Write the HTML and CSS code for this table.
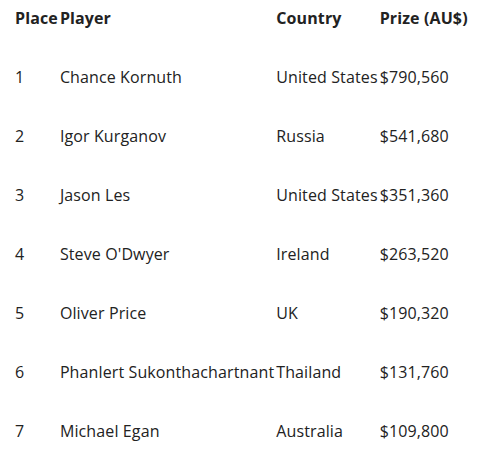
FILE: index.html
```html
<!DOCTYPE html>
<html>
<head>
<meta charset="utf-8">
<link rel="stylesheet" href="styles.css">
</head>
<body>
<div class="wrap">
<table class="results">
<thead>
<tr><th>Place</th><th>Player</th><th>Country</th><th>Prize (AU$)</th></tr>
</thead>
<tbody>
<tr><td>1</td><td>Chance Kornuth</td><td>United States</td><td>$790,560</td></tr>
<tr><td>2</td><td>Igor Kurganov</td><td>Russia</td><td>$541,680</td></tr>
<tr><td>3</td><td>Jason Les</td><td>United States</td><td>$351,360</td></tr>
<tr><td>4</td><td>Steve O'Dwyer</td><td>Ireland</td><td>$263,520</td></tr>
<tr><td>5</td><td>Oliver Price</td><td>UK</td><td>$190,320</td></tr>
<tr><td>6</td><td>Phanlert Sukonthachartnant</td><td>Thailand</td><td>$131,760</td></tr>
<tr><td>7</td><td>Michael Egan</td><td>Australia</td><td>$109,800</td></tr>
</tbody>
</table>
</div>
</body>
</html>
```

FILE: styles.css
```css
html, body {
  margin: 0;
  background: #fff;
}
.wrap {
  padding: 6px 14px;
}
.results {
  border-collapse: collapse;
  font-family: "Open Sans", sans-serif;
  font-size: 16px;
  line-height: 24px;
  letter-spacing: 0.12px;
  color: #222;
}
.results th {
  font-weight: 700;
  text-align: left;
  padding: 0 1px 17.5px;
  vertical-align: top;
}
.results td {
  padding: 17.5px 1px;
  text-align: left;
  vertical-align: middle;
}
```
